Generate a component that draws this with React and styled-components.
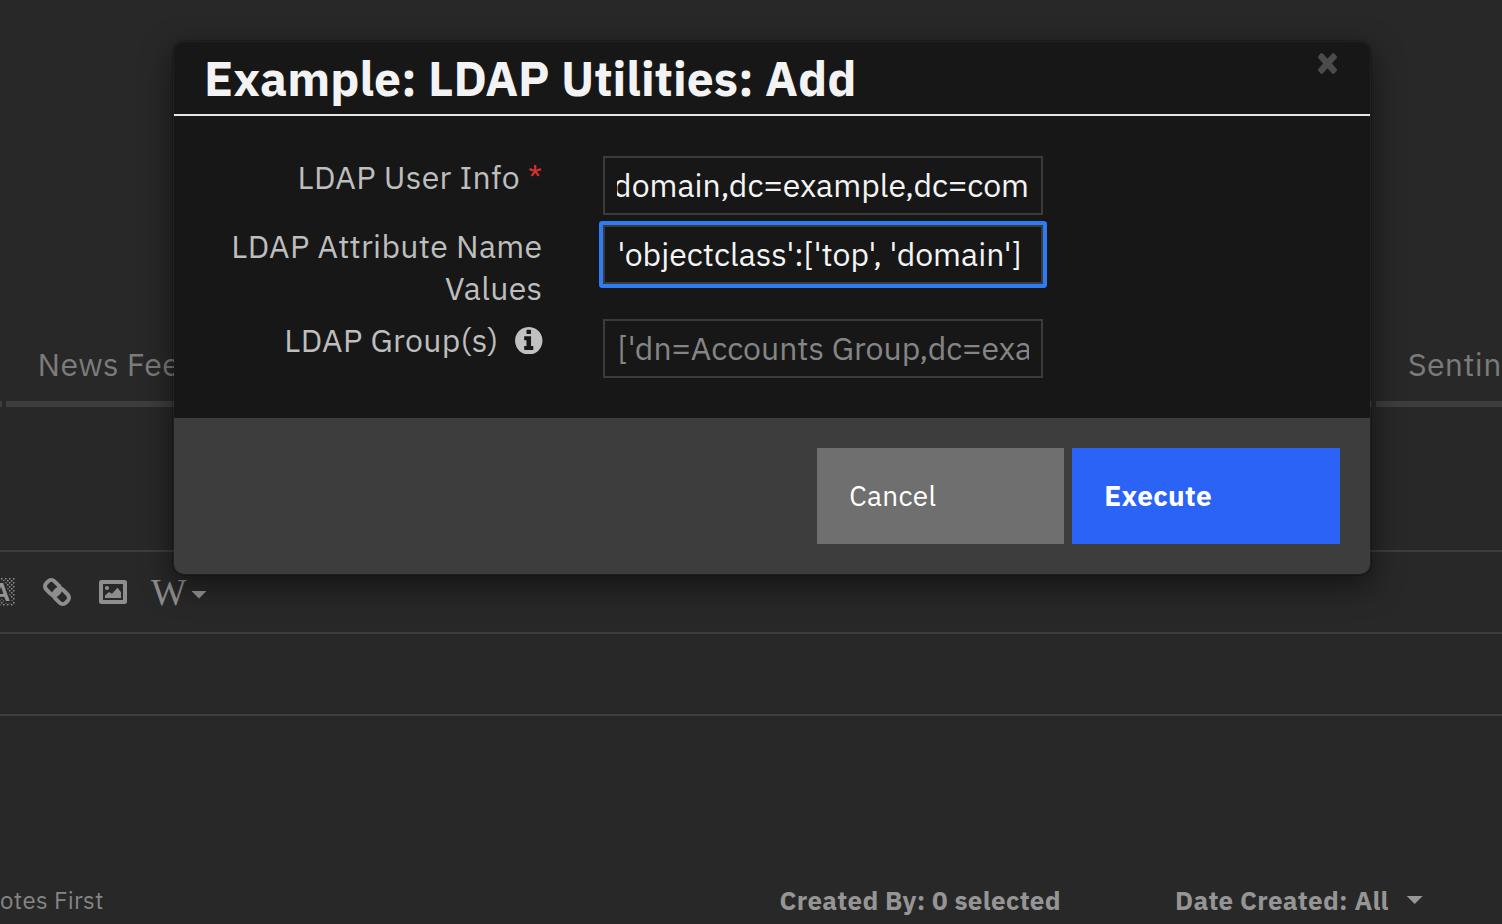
import React from 'react';
import styled, { createGlobalStyle } from 'styled-components';

const GlobalStyle = createGlobalStyle`
  * { box-sizing: border-box; }
  body {
    margin: 0;
    overflow: hidden;
    background: #282828;
    font-family: "IBM Plex Sans", "Noto Sans", sans-serif;
    letter-spacing: 0.32px;
  }
`;

const Page = styled.div`
  position: relative;
  display: flex;
  flex-direction: column;
  width: 1502px;
  height: 924px;
  padding-top: 343px;
  overflow: hidden;
  background: #282828;
  color: #8d8d8d;
  white-space: nowrap;
`;

const Tabs = styled.nav`
  display: grid;
  grid-template-columns: 2px 1366px 126px;
  gap: 4px;
  height: 64px;
`;

const Tab = styled.div`
  padding-left: ${(p) => p.$inset || 0}px;
  border-bottom: 6px solid #3d3d3d;
  overflow: hidden;
  color: #7b7b7b;
  font-size: 32px;
  line-height: 43px;
`;

const Editor = styled.section`
  display: flex;
  flex-direction: column;
  margin-top: 143px;
`;

const Toolbar = styled.div`
  display: flex;
  align-items: center;
  height: 82px;
  border-top: 2px solid #3d3d3d;
`;

const EditorLine = styled.div`
  height: 84px;
  border-top: 2px solid #3d3d3d;
  border-bottom: 2px solid #3d3d3d;
`;

const ToolIcon = styled.svg`
  flex: none;
  display: block;
  margin-left: ${(p) => p.$gap || 0}px;
`;

const WikiMark = styled.span`
  width: 36px;
  margin: 2px 0 0 24px;
  font: 37.5px/42px "Liberation Serif", serif;
  letter-spacing: 0;
  color: #8e8e8e;
`;

const Caret = styled.span`
  width: 16px;
  height: 8px;
  margin: ${(p) => p.$margin};
  background: #979797;
  clip-path: polygon(0 0, 100% 0, 50% 100%);
`;

const Filters = styled.footer`
  display: grid;
  grid-template-columns: 779.5px 395.5px 1fr;
  align-items: center;
  height: 40px;
  margin-top: 164px;
`;

const SortLabel = styled.span`
  font-size: 24px;
  color: #858585;
`;

const Filter = styled.span`
  display: flex;
  align-items: center;
  font-size: 26px;
  font-weight: 700;
  color: #959595;
`;

const Modal = styled.section`
  position: absolute;
  top: 40px;
  left: 172px;
  width: 1200px;
  border: 2px solid rgba(0, 0, 0, 0.2);
  border-radius: 12px;
  overflow: hidden;
  background: #171717;
  background-clip: padding-box;
  box-shadow: 0 10px 30px rgba(0, 0, 0, 0.5);
`;

const ModalHeader = styled.header`
  display: flex;
  justify-content: space-between;
  align-items: flex-start;
  height: 74px;
  padding: 0 33px 0 30px;
  border-bottom: 2px solid #e6e8e7;
`;

const Title = styled.h1`
  margin: 0;
  color: #f3f3f3;
  font-size: 48px;
  font-weight: 700;
  line-height: 72px;
  letter-spacing: 0;
`;

const CloseButton = styled.button`
  display: block;
  margin: 11px 0 0;
  padding: 0;
  border: 0;
  background: none;
  line-height: 0;
`;

const Form = styled.div`
  display: flex;
  flex-direction: column;
  gap: 10px;
  padding: 40px 0;
`;

const FormRow = styled.div`
  display: grid;
  grid-template-columns: 368.5px 440px;
  column-gap: 60.5px;
  align-items: start;
`;

const Label = styled.label`
  color: #bebebe;
  font-size: 32px;
  line-height: 42px;
  text-align: right;
  white-space: pre-line;
`;

const Required = styled.span`
  color: #d5312d;
`;

const InfoIcon = styled.svg`
  margin-left: 16.4px;
  vertical-align: -2px;
`;

const Field = styled.div`
  display: flex;
  width: 440px;
  height: 59px;
  padding: 0 12px;
  border: 2px solid #3b3b3b;
  box-shadow: ${(p) => (p.$focused ? '0 0 0 4px #2f7bf6' : 'none')};
  border-radius: ${(p) => (p.$focused ? 1 : 0)}px;
  color: ${(p) => (p.$placeholder ? '#858585' : '#f4f4f4')};
  font-size: 32px;
  line-height: 55px;
  letter-spacing: 0;
`;

const FieldText = styled.span`
  display: flex;
  flex: 1;
  justify-content: ${(p) => (p.$toEnd ? 'flex-end' : 'flex-start')};
  min-width: 0;
  padding-left: ${(p) => (p.$toEnd ? 0 : 0.6)}px;
  overflow: hidden;
  white-space: pre;
`;

const ModalFooter = styled.footer`
  display: flex;
  justify-content: flex-end;
  gap: 8px;
  height: 156px;
  padding: 30px;
  background: #3d3d3d;
`;

const Button = styled.button`
  width: ${(p) => (p.$primary ? 268 : 247)}px;
  height: 96px;
  padding: 0 0 2px 32.3px;
  border: 0;
  background: ${(p) => (p.$primary ? '#2a63f6' : '#6f6f6f')};
  color: #fff;
  font-family: inherit;
  font-size: 28px;
  font-weight: ${(p) => (p.$primary ? 700 : 400)};
  letter-spacing: inherit;
  text-align: left;
`;

const HighlightIcon = () => (
  <ToolIcon width="16" height="28" viewBox="0 0 16 28">
    <defs>
      <pattern id="dots" width="4" height="4" patternUnits="userSpaceOnUse">
        <rect x="1" width="1.5" height="1.5" fill="#8e8e8e" />
        <rect x="3" y="2" width="1" height="1.5" fill="#8e8e8e" />
        <rect x="0" y="2" width="0.5" height="1.5" fill="#8e8e8e" />
      </pattern>
    </defs>
    <rect width="15" height="28" fill="url(#dots)" />
    <text
      x="1"
      y="23"
      textAnchor="middle"
      fontFamily="Liberation Sans, sans-serif"
      fontWeight="700"
      fontSize="26"
      letterSpacing="0"
      fill="#949494"
      stroke="#282828"
      strokeWidth="4"
      paintOrder="stroke"
    >
      A
    </text>
  </ToolIcon>
);

const LinkIcon = () => (
  <ToolIcon $gap={27} width="28" height="28" viewBox="0 0 28 28" fill="none" stroke="#8e8e8e" strokeWidth="4">
    <rect x="1.95" y="3.95" width="15.5" height="11.5" rx="4.5" transform="rotate(45 9.7 9.7)" />
    <rect x="10.55" y="12.55" width="15.5" height="11.5" rx="4.5" transform="rotate(45 18.3 18.3)" />
  </ToolIcon>
);

const ImageIcon = () => (
  <ToolIcon $gap={28} width="28" height="24" viewBox="0 0 28 24">
    <rect x="2" y="2" width="24" height="20" rx="0.5" fill="none" stroke="#8e8e8e" strokeWidth="4" />
    <circle cx="8" cy="8" r="2.1" fill="#8e8e8e" />
    <path d="M6 18v-2.5l4-3.5 3 1.8 5.5-6 3.5 4.4v5.800z" fill="#8e8e8e" />
  </ToolIcon>
);

const Info = () => (
  <InfoIcon width="27.5" height="27.5" viewBox="128 128 1536 1536" fill="#c1c1c1">
    <path d="M1152 1376v-160q0-14-9-23t-23-9h-96v-512q0-14-9-23t-23-9h-320q-14 0-23 9t-9 23v160q0 14 9 23t23 9h96v320h-96q-14 0-23 9t-9 23v160q0 14 9 23t23 9h448q14 0 23-9t9-23zm-128-896v-160q0-14-9-23t-23-9h-192q-14 0-23 9t-9 23v160q0 14 9 23t23 9h192q14 0 23-9t9-23zm640 416q0 209-103 385.5t-279.5 279.5-385.5 103-385.5-103-279.5-279.5-103-385.5 103-385.5 279.5-279.5 385.5-103 385.5 103 279.5 279.5 103 385.5z" />
  </InfoIcon>
);

const CloseIcon = () => (
  <svg width="19" height="21" viewBox="302 366 1188 1188" preserveAspectRatio="none" fill="#4b4b4b">
    <path d="M1490 1322q0 40-28 68l-136 136q-28 28-68 28t-68-28l-294-294-294 294q-28 28-68 28t-68-28l-136-136q-28-28-28-68t28-68l294-294-294-294q-28-28-28-68t28-68l136-136q28-28 68-28t68 28l294 294 294-294q28-28 68-28t68 28l136 136q28 28 28 68t-28 68l-294 294 294 294q28 28 28 68z" />
  </svg>
);

export default function App() {
  return (
    <>
      <GlobalStyle />
      <Page>
        <Tabs>
          <Tab />
          <Tab $inset={31.6}>News Feed</Tab>
          <Tab $inset={32}>Sentin</Tab>
        </Tabs>
        <Editor>
          <Toolbar>
            <HighlightIcon />
            <LinkIcon />
            <ImageIcon />
            <WikiMark>W</WikiMark>
            <Caret $margin="5px 0 0 4px" />
          </Toolbar>
          <EditorLine />
        </Editor>
        <Filters>
          <SortLabel>otes First</SortLabel>
          <Filter>Created By: 0 selected</Filter>
          <Filter>
            Date Created: All
            <Caret $margin="0 0 0 18px" />
          </Filter>
        </Filters>

        <Modal role="dialog">
          <ModalHeader>
            <Title>Example: LDAP Utilities: Add</Title>
            <CloseButton aria-label="Close">
              <CloseIcon />
            </CloseButton>
          </ModalHeader>
          <Form>
            <FormRow>
              <Label>
                LDAP User Info <Required>*</Required>
              </Label>
              <Field>
                <FieldText $toEnd>domain,dc=example,dc=com</FieldText>
              </Field>
            </FormRow>
            <FormRow>
              <Label>{'LDAP Attribute Name\nValues'}</Label>
              <Field $focused>
                <FieldText>{"'objectclass':['top', 'domain']"}</FieldText>
              </Field>
            </FormRow>
            <FormRow>
              <Label>
                LDAP Group(s)
                <Info />
              </Label>
              <Field $placeholder>
                <FieldText>{"['dn=Accounts Group,dc=example"}</FieldText>
              </Field>
            </FormRow>
          </Form>
          <ModalFooter>
            <Button>Cancel</Button>
            <Button $primary>Execute</Button>
          </ModalFooter>
        </Modal>
      </Page>
    </>
  );
}
